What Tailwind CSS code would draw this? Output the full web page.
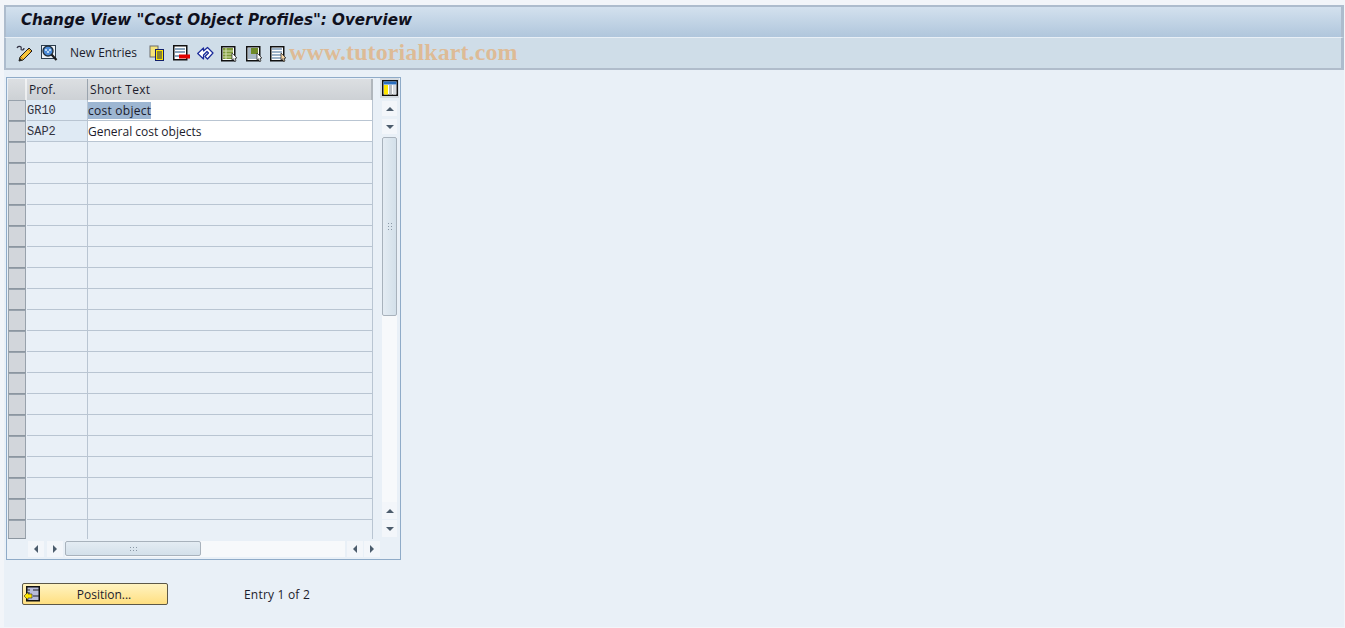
<!DOCTYPE html>
<html>
<head>
<meta charset="utf-8">
<script src="https://cdn.jsdelivr.net/npm/@tailwindcss/browser@4"></script>
</head>
<body class="w-[1345px] h-[628px] overflow-hidden bg-[#f2f5f9] font-['Open_Sans','Noto_Sans',sans-serif] text-[12px] text-[#1c1c2c]">
<div class="relative ml-[4px] mt-[5px] w-[1340px] h-[622px] flex flex-col bg-[#e9f0f7]">
    <!-- Title bar -->
    <div class="h-[32px] border-2 border-b-0 border-[#adbccd] border-r-[3px] bg-gradient-to-b from-[#d3e1ee] to-[#b0c6dc] pl-[15px] pb-[4px] flex items-center">
        <h1 class="font-['DejaVu_Sans',sans-serif] font-bold italic text-[15.150px] text-[#10101c]">Change View "Cost Object Profiles": Overview</h1>
    </div>
    <!-- Toolbar -->
    <div class="h-[33px] border-t border-[#e8eff6] border-b-2 border-b-[#b0bccb] border-l-2 border-l-[#adbccd] border-r-[3px] border-r-[#adbccd] bg-[#cfdde8] flex items-center pl-[10px]">
        <svg class="w-[18px] h-[18px]" viewBox="0 0 18 18"><path d="M4 13 L13 4 L16 7 L7 16 L3 17 Z" fill="#f7c63c" stroke="#1c1c1c"/><path d="M5 13l2 2M12 5l3 3" stroke="#d07a10"/><path d="M3 17l1-3 2 2z" fill="#222"/><path d="M1 4c1-2 3-2 4-1s-1 3 1 3 2-1 2-2" fill="none" stroke="#334" stroke-width="1.200"/></svg>
        <svg class="w-[18px] h-[18px] ml-[6px]" viewBox="0 0 18 18"><rect x="1.500" y="1.500" width="14" height="13" fill="#eef3f8" stroke="#2c3c4c"/><circle cx="8" cy="7" r="5" fill="#4c8bd8" stroke="#22303c" stroke-width="1.400"/><path d="M5 5h2v2H5zM9 5h2v2H9zM7 7h2v2H7z" fill="#bcd8f4"/><path d="M11.500 10.500l5 5.500" stroke="#1c1c1c" stroke-width="2.200"/></svg>
        <span class="ml-[12px] w-[79px] text-[12px]">New Entries</span>
        <svg class="w-[16px] h-[16px]" viewBox="0 0 16 16"><rect x="1" y="1" width="8" height="11" fill="#f5e37a" stroke="#6c6c6c"/><rect x="6.500" y="4.500" width="8" height="11" fill="#ffe600" stroke="#101f6c"/><path d="M8 7h5M8 9h5M8 11h5M8 13h5" stroke="#101f6c"/></svg>
        <svg class="w-[17px] h-[16px] ml-[8px]" viewBox="0 0 17 16"><rect x="0.750" y="0.750" width="13" height="14" fill="#fff" stroke="#111" stroke-width="1.500"/><path d="M2 4h10M2 7h10" stroke="#8aa4bc" stroke-width="2"/><path d="M2 11h4" stroke="#8aa4bc" stroke-width="2"/><rect x="6" y="9.500" width="11" height="4" fill="#e00000"/></svg>
        <svg class="w-[17px] h-[16px] ml-[7px]" viewBox="0 0 17 16"><path d="M0.700 8.500L6.500 3v3l4-3.500L16 8l-5.500 6L8 11.500 11.500 8 10 6.500 6.500 10v4z" fill="#fff" stroke="#1a2a9a" stroke-width="1.200" stroke-linejoin="round"/></svg>
        <svg class="w-[17px] h-[17px] ml-[7px]" viewBox="0 0 17 17"><rect x="0.750" y="1.750" width="13" height="14" fill="#fff" stroke="#111" stroke-width="1.500"/><path d="M2 3h10v11H2z" fill="#7f9a3a"/><path d="M2 6h10M2 9h10M2 12h10M5 3v11" stroke="#d5e0b0"/><path d="M11 8l5 5-2 .3 1 2.700-1.500.5-1-2.700-1.500 1.200z" fill="#fff" stroke="#222" stroke-width="0.700"/></svg>
        <svg class="w-[17px] h-[17px] ml-[8px]" viewBox="0 0 17 17"><rect x="0.750" y="1.750" width="13" height="14" fill="#fff" stroke="#111" stroke-width="1.500"/><path d="M2 3h10v11H2z" fill="#a9b8c6"/><path d="M5 3h7v6H5z" fill="#6f8a2a"/><path d="M11 8l5 5-2 .3 1 2.700-1.500.5-1-2.700-1.500 1.200z" fill="#fff" stroke="#222" stroke-width="0.700"/></svg>
        <svg class="w-[17px] h-[17px] ml-[7px]" viewBox="0 0 17 17"><rect x="0.750" y="1.750" width="13" height="14" fill="#fff" stroke="#111" stroke-width="1.500"/><path d="M2 4h10M2 7h10M2 10h10M2 13h10" stroke="#7d9ab8" stroke-width="1.500"/><path d="M11 8l5 5-2 .3 1 2.700-1.500.5-1-2.700-1.500 1.200z" fill="#f6d6a8" stroke="#222" stroke-width="0.700"/></svg>
    </div>
    <!-- Watermark -->
    <div class="absolute left-[285px] top-[32px] font-['Liberation_Serif',serif] font-bold text-[24px] leading-[30px] tracking-[0.1px] text-[#e8a55e]/60">www.tutorialkart.com</div>

    <div class="pl-[2px] pt-[7px] flex-1 flex flex-col">
        <!-- Table control -->
        <div class="w-[395px] h-[483px] border border-[#8fabc8] flex">
            <div id="grid" class="w-[366px] pl-[1px] pt-[1px] flex flex-col">
                <div class="flex h-[21px]">
                    <div class="w-[19px] border-r-2 border-white/60 bg-gradient-to-b from-[#dcdfe2] to-[#cdd1d5]"></div>
                    <div class="w-[61px] pl-[2px] border-r border-[#9aa4ae] bg-gradient-to-b from-[#dcdfe2] to-[#cdd1d5] leading-[21px]">Prof.</div>
                    <div class="flex-1 pl-[2px] border-r-2 border-[#b0b6bc] bg-gradient-to-b from-[#dcdfe2] to-[#cdd1d5] leading-[21px] tracking-[0.3px]">Short Text</div>
                </div>
                <div class="flex h-[21px]">
                    <div class="w-[18px] mr-[1px] border border-[#98a2ac] border-b-[#8c96a0] bg-[#d2d6db]"></div>
                    <div class="w-[61px] border-r border-b border-[#b9c5d2] bg-[#dfeaf4] font-['Liberation_Mono',monospace] text-[12px] text-[#33333f] leading-[22px]">GR10</div>
                    <div class="flex-1 border-r border-b border-[#b9c5d2] bg-white leading-[21px]"><span class="bg-[#9db6d2] tracking-[0.25px]">cost object</span></div>
                </div>
                <div class="flex h-[21px]">
                    <div class="w-[18px] mr-[1px] border border-[#98a2ac] border-b-[#8c96a0] bg-[#d2d6db]"></div>
                    <div class="w-[61px] border-r border-b border-[#b9c5d2] bg-[#dfeaf4] font-['Liberation_Mono',monospace] text-[12px] text-[#33333f] leading-[22px]">SAP2</div>
                    <div class="flex-1 border-r border-b border-[#b9c5d2] bg-white leading-[21px]">General cost objects</div>
                </div>
            </div>
            <!-- Vertical scrollbar column -->
            <div class="w-[28px] pl-[6px] flex flex-col items-center">
                <div class="w-[19px] h-[20px] bg-[#d4dae0] flex items-center justify-center">
                    <svg class="w-[16px] h-[16px]" viewBox="0 0 16 16"><rect x="0.750" y="0.750" width="14.500" height="14.500" fill="#fff" stroke="#111" stroke-width="1.500"/><rect x="1.500" y="1.500" width="13" height="3" fill="#2a6fc0"/><rect x="2" y="5" width="4" height="9.500" fill="#ffe600"/><rect x="7" y="5" width="3" height="9.500" fill="#b8bcc0"/><rect x="11" y="5" width="3" height="9.500" fill="#d8dce0"/></svg>
                </div>
                <div class="mt-[3px] w-[15px] h-[15px] bg-[#f3f6fa] flex items-center justify-center"><div class="border-x-[4px] border-x-transparent border-b-[4px] border-b-[#4c5c6c]"></div></div>
                <div class="mt-[3px] w-[15px] h-[15px] bg-[#f3f6fa] flex items-center justify-center"><div class="border-x-[4px] border-x-transparent border-t-[4px] border-t-[#4c5c6c]"></div></div>
                <div class="mt-[3px] w-[15px] h-[365px] bg-[#f7f9fb]">
                    <div class="w-[15px] h-[179px] border border-[#a8b2bc] rounded-[2px] bg-gradient-to-r from-[#e4ecf3] to-[#d3e0ea] flex items-center justify-center">
                        <div class="w-[5px] h-[9px] bg-[radial-gradient(#8a98a6_1px,transparent_1px)] bg-[length:3px_3px]"></div>
                    </div>
                </div>
                <div class="w-[15px] h-[17px] bg-[#f3f6fa] flex items-center justify-center"><div class="border-x-[4px] border-x-transparent border-b-[4px] border-b-[#4c5c6c]"></div></div>
                <div class="mt-[1px] w-[15px] h-[17px] bg-[#f3f6fa] flex items-center justify-center"><div class="border-x-[4px] border-x-transparent border-t-[4px] border-t-[#4c5c6c]"></div></div>
            </div>
        </div>
        <!-- Position button -->
        <div class="flex items-center pl-[16px] mt-[23px]">
            <button class="relative w-[146px] h-[22px] border border-[#5c5848] rounded-[2px] bg-gradient-to-b from-[#fff3c0] to-[#ffdf80] pl-[18px] pt-[1px] text-center">
                <svg class="absolute left-[1px] top-[1px] w-[16px] h-[17px]" viewBox="0 0 16 17"><rect x="2.750" y="1.750" width="12.500" height="14" fill="#b8bcdc" stroke="#111" stroke-width="1.500"/><path d="M9 5h6M9 11h6" stroke="#222"/><path d="M3 5h3M3 8h3" stroke="#333"/><path d="M0 11l4-4v2h4v4H4v2z" fill="#ffe600" stroke="#222" stroke-width="0.600"/></svg>
                Position...
            </button>
            <span class="ml-[76px] pt-[1px] tracking-[0.2px]">Entry 1 of 2</span>
        </div>
    </div>
</div>
<script>
// Empty table rows and the horizontal scrollbar
const grid = document.getElementById('grid');
for (let i = 0; i < 18; i++) {
    const row = document.createElement('div');
    row.className = 'flex h-[21px]';
    row.innerHTML = '<div class="w-[18px] mr-[1px] border border-[#98a2ac] border-b-[#8c96a0] bg-[#d2d6db]"></div>'
        + '<div class="w-[61px] border-r border-b border-[#b9c5d2]"></div>'
        + '<div class="flex-1 border-r border-b border-[#b9c5d2]"></div>';
    grid.appendChild(row);
}
const lastRow = document.createElement('div');
lastRow.className = 'flex h-[19px]';
lastRow.innerHTML = '<div class="w-[18px] mr-[1px] border border-[#98a2ac] border-b-[#8c96a0] bg-[#d2d6db]"></div>'
    + '<div class="w-[61px] border-r border-[#b9c5d2]"></div>'
    + '<div class="flex-1 border-r border-[#b9c5d2]"></div>';
grid.appendChild(lastRow);
const hbar = document.createElement('div');
hbar.className = 'flex items-center h-[16px] mt-[2px] pl-[20px] w-[372px]';
hbar.innerHTML = `
    <div class="w-[16px] h-[16px] bg-[#f3f6fa] flex items-center justify-center"><div class="border-y-[4px] border-y-transparent border-r-[4px] border-r-[#4c5c6c]"></div></div>
    <div class="ml-[3px] w-[16px] h-[16px] bg-[#f3f6fa] flex items-center justify-center"><div class="border-y-[4px] border-y-transparent border-l-[4px] border-l-[#4c5c6c]"></div></div>
    <div class="ml-[2px] flex-1 h-[16px] bg-[#f7f9fb]"><div class="w-[136px] h-[15px] border border-[#a8b2bc] rounded-[2px] bg-gradient-to-b from-[#e4ecf3] to-[#d3e0ea] flex items-center justify-center"><div class="w-[9px] h-[5px] bg-[radial-gradient(#8a98a6_1px,transparent_1px)] bg-[length:3px_3px]"></div></div></div>
    <div class="ml-[2px] w-[16px] h-[16px] bg-[#f3f6fa] flex items-center justify-center"><div class="border-y-[4px] border-y-transparent border-r-[4px] border-r-[#4c5c6c]"></div></div>
    <div class="ml-[1px] w-[16px] h-[16px] bg-[#f3f6fa] flex items-center justify-center"><div class="border-y-[4px] border-y-transparent border-l-[4px] border-l-[#4c5c6c]"></div></div>`;
grid.appendChild(hbar);
</script>
</body>
</html>
